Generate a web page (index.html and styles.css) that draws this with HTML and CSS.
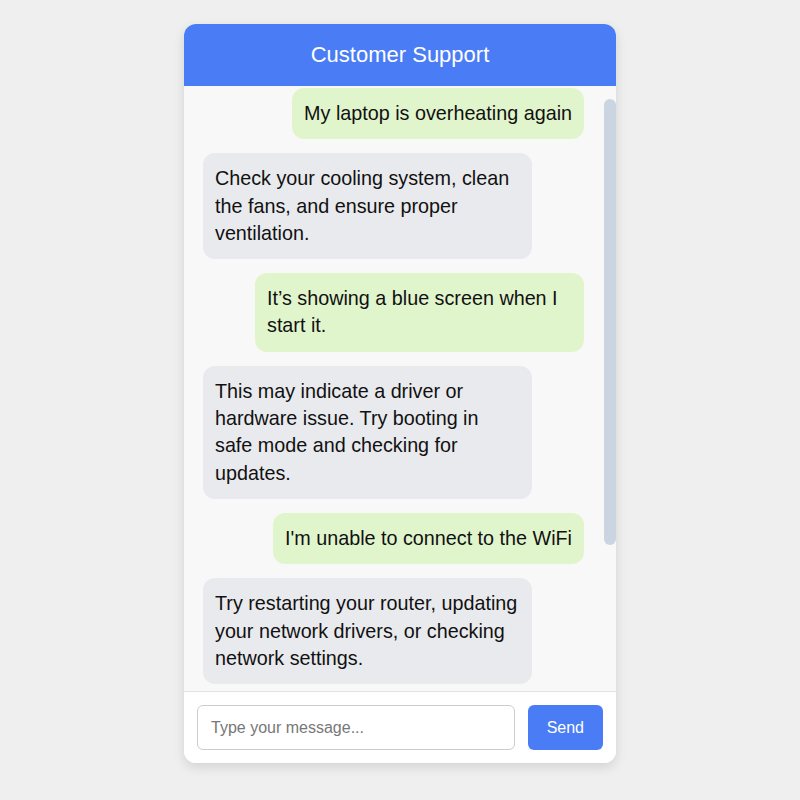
FILE: index.html
```html
<!DOCTYPE html>
<html lang="en">
<head>
<meta charset="utf-8">
<title>Customer Support</title>
<link rel="stylesheet" href="styles.css">
</head>
<body>
<div class="chat">
  <header class="chat-header">Customer Support</header>
  <div class="body">
    <div class="messages">
      <div class="msg user">My laptop is overheating again</div>
      <div class="msg bot">Check your cooling system, clean the fans, and ensure proper ventilation.</div>
      <div class="msg user">It’s showing a blue screen when I start it.</div>
      <div class="msg bot">This may indicate a driver or hardware issue. Try booting in safe mode and checking for updates.</div>
      <div class="msg user">I'm unable to connect to the WiFi</div>
      <div class="msg bot">Try restarting your router, updating your network drivers, or checking network settings.</div>
    </div>
    <div class="scrollbar"><div class="scrollbar-thumb"></div></div>
  </div>
  <form class="composer">
    <input class="composer-input" type="text" placeholder="Type your message...">
    <button class="composer-send" type="button">Send</button>
  </form>
</div>
</body>
</html>
```

FILE: styles.css
```css
html, body {
  margin: 0;
  padding: 0;
}
body {
  background: #efefef;
  font-family: "Liberation Sans", Arial, sans-serif;
  padding: 24px 0;
}
.chat {
  width: 432px;
  height: 739px;
  margin: 0 auto;
  background: #ffffff;
  border-radius: 12px;
  box-shadow: 0 4px 12px rgba(0, 0, 0, 0.12);
  display: flex;
  flex-direction: column;
  overflow: hidden;
}
.chat-header {
  background: #4a7df5;
  color: #ffffff;
  font-size: 22px;
  line-height: 26px;
  padding: 18px 0;
  text-align: center;
  flex: none;
}
.body {
  flex: 1;
  min-height: 0;
  display: flex;
  background: #f8f8f8;
}
.messages {
  flex: 1;
  min-width: 0;
  overflow: hidden;
  padding: 2px 20px 0 19px;
  display: flex;
  flex-direction: column;
  gap: 14px;
}
.scrollbar {
  width: 12px;
  flex: none;
  padding-top: 13px;
}
.scrollbar-thumb {
  height: 446px;
  background: #cbd5e1;
  border-radius: 6px;
}
.msg {
  max-width: 305px;
  padding: 12px;
  border-radius: 12px;
  font-size: 19.75px;
  line-height: 27.3px;
  color: #111111;
  flex: none;
}
.msg.user {
  align-self: flex-end;
  background: #e1f5cd;
}
.msg.bot {
  align-self: flex-start;
  background: #e9eaee;
}
.composer {
  flex: none;
  margin: 0;
  border-top: 1px solid #e3e3e3;
  padding: 13px;
  display: flex;
  gap: 13px;
  background: #ffffff;
}
.composer-input {
  flex: 1;
  min-width: 0;
  height: 45px;
  box-sizing: border-box;
  border: 1px solid #cccccc;
  border-radius: 6px;
  padding: 0 13px;
  font-family: "Liberation Sans", Arial, sans-serif;
  font-size: 16px;
  line-height: 20px;
  color: #111111;
  background: #ffffff;
}
.composer-input::placeholder {
  color: #777777;
}
.composer-send {
  height: 45px;
  padding: 0 19px;
  border: none;
  border-radius: 6px;
  background: #4a7df5;
  color: #ffffff;
  font-family: "Liberation Sans", Arial, sans-serif;
  font-size: 16px;
}
```
